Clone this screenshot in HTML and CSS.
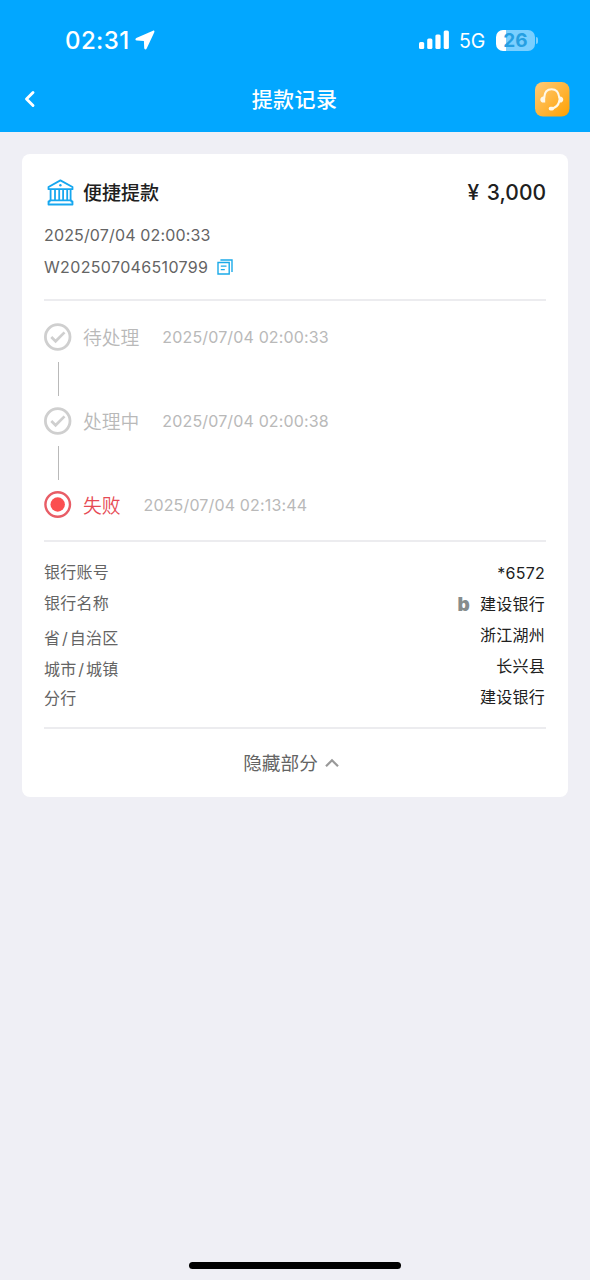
FILE: index.html
```html
<!DOCTYPE html>
<html lang="zh-CN">
<head>
<meta charset="utf-8">
<meta name="viewport" content="width=device-width, initial-scale=1">
<title>提款记录</title>
<link rel="stylesheet" href="styles.css">
</head>
<body>
<header class="header">
  <div class="status">
    <span class="clock">02:31</span>
    <svg class="location" width="20" height="20" viewBox="0 0 20 20"><path d="M18 0.7 1.3 8C0 8.7.1 10.5 1.8 10.6L8.9 10.9 9.2 18C9.3 19.7 11 19.9 11.7 18.5L19.3 2.2C19.8 1.1 19 .3 18 .7Z" fill="#fff"/></svg>
    <svg class="signal" width="31" height="20" viewBox="0 0 31 20" fill="#fff"><rect x="0" y="12" width="5.2" height="7" rx="1.5"/><rect x="8.2" y="8.4" width="5.2" height="10.6" rx="1.5"/><rect x="16.4" y="4.5" width="5.2" height="14.5" rx="1.5"/><rect x="24.7" y="0.5" width="5.2" height="18.5" rx="1.5"/></svg>
    <span class="network">5G</span>
    <span class="battery">26</span><span class="battery-cap"></span>
  </div>
  <nav class="nav">
    <svg class="back" width="12" height="18" viewBox="0 0 12 18"><path d="M9 2.5 2.5 9 9 15.5" fill="none" stroke="#fff" stroke-width="2.9" stroke-linecap="round" stroke-linejoin="round"/></svg>
    <h1 class="title">提款记录</h1>
    <svg class="support" width="35" height="35" viewBox="0 0 35 35">
      <defs><linearGradient id="orange" x1="0" y1="0" x2="1" y2="1"><stop offset="0" stop-color="#ffcb79"/><stop offset="1" stop-color="#ffa000"/></linearGradient></defs>
      <rect x="0" y="0" width="34.5" height="34.5" rx="8" fill="url(#orange)"/>
      <path d="M9.2 15.5C9.5 10.4 12.3 7.2 16.6 7.2S23.7 10.4 24.3 15.5M24.3 19C23.5 23.2 20.7 26 16.1 26.7" fill="none" stroke="#fff8e8" stroke-width="2.1" stroke-linecap="round"/>
      <path d="M10.2 14.4v6.2H8.7c-4.5 0-4.5-6.2 0-6.2ZM23.5 14.4v6.2h1.4c4.5 0 4.5-6.2 0-6.2Z" fill="#fff8e8"/><rect x="13.7" y="24.8" width="5.4" height="3.7" rx="1.8" fill="#fff8e8"/>
    </svg>
  </nav>
</header>
<main class="card">
  <section class="summary">
    <div class="summary-head">
      <svg class="bank" width="27" height="27" viewBox="0 0 27 27" fill="none" stroke="#17a7ef" stroke-width="1.8" stroke-linejoin="round"><path d="M1.5 8 13.4 1.4 25.5 8V10.2H1.5ZM3.6 10.7V21M8 10.7V21M12.2 10.7V21M16.1 10.7V21M20.2 10.7V21M23.6 10.7V21M2.7 21.3H24.3V22.5H25.5V25.5H1.5V22.5H2.7Z"/><circle cx="13.4" cy="6.3" r="1.2" fill="#17a7ef" stroke="none"/></svg>
      <span class="method">便捷提款</span>
      <span class="amount">¥ 3,000</span>
    </div>
    <div class="meta">2025/07/04 02:00:33</div>
    <div class="meta order"><span class="order-id">W202507046510799</span>
      <svg width="16" height="16" viewBox="0 0 16 16" fill="none" stroke="#1baae9" stroke-width="1.4"><path d="M3.4 1H15V13M1 3.5H12.2V15H1ZM3.8 7.1H9.5M3.8 10.6H7.8"/></svg>
    </div>
  </section>
  <section class="timeline">
    <div class="step">
      <svg width="28" height="28" viewBox="0 0 28 28" fill="none" stroke="#cfcfcf"><circle cx="13.7" cy="14" r="12.3" stroke-width="2.8"/><path d="m7.3 14 4.3 4.3 8.9-8.9" stroke-width="2.7"/></svg>
      <span class="state">待处理</span><time class="time">2025/07/04 02:00:33</time>
    </div>
    <div class="connector"></div>
    <div class="step">
      <svg width="28" height="28" viewBox="0 0 28 28" fill="none" stroke="#cfcfcf"><circle cx="13.7" cy="14" r="12.3" stroke-width="2.8"/><path d="m7.3 14 4.3 4.3 8.9-8.9" stroke-width="2.7"/></svg>
      <span class="state">处理中</span><time class="time">2025/07/04 02:00:38</time>
    </div>
    <div class="connector"></div>
    <div class="step failed">
      <svg width="28" height="28" viewBox="0 0 28 28"><circle cx="13.7" cy="13.5" r="12.3" fill="none" stroke="#e85d66" stroke-width="2.4"/><circle cx="13.7" cy="13.5" r="7.2" fill="#fb4f50"/></svg>
      <span class="state">失败</span><time class="time">2025/07/04 02:13:44</time>
    </div>
  </section>
  <section class="details">
    <div class="labels"><span>银行账号</span><span>银行名称</span><span class="region">省<i class="slash">/</i>自治区</span><span class="city">城市<i class="slash">/</i>城镇</span><span>分行</span></div>
    <div class="values"><span class="account">*6572</span><span class="bank-name"><b class="bank-mark">b</b>建设银行</span><span>浙江湖州</span><span>长兴县</span><span>建设银行</span></div>
  </section>
  <div class="toggle"><span class="toggle-text">隐藏部分</span>
    <svg width="14" height="10" viewBox="0 0 14 10"><path d="m1 8.3 6-6 6 6" fill="none" stroke="#999" stroke-width="2.2"/></svg>
  </div>
</main>
<footer class="home"><div class="home-bar"></div></footer>
</body>
</html>
```
FILE: styles.css
```css
* { box-sizing: border-box; }
body { margin: 0; min-height: 1280px; display: flex; flex-direction: column; background: #efeff5; font-family: Inter, "Noto Sans CJK SC", sans-serif; color: #202020; }
svg { display: block; flex: none; }
span, time { white-space: nowrap; }
.header { height: 132px; padding-top: 20px; background: #02a7ff; color: #fff; }
.status { height: 40px; display: flex; align-items: center; padding: 0 52px 0 65px; }
.clock { width: 65px; font-size: 24px; font-weight: 500; letter-spacing: .4px; }
.location { margin-left: 5px; }
.signal { margin-left: auto; }
.network { width: 27px; margin: 2px 10px 0 9px; font-size: 19.5px; }
.battery { width: 39px; height: 21px; border-radius: 7px; background: linear-gradient(90deg, #fff 10px, #7acfff 10px); color: #259fe2; font-size: 19px; line-height: 21px; font-weight: 700; text-align: center; }
.battery-cap { width: 2px; height: 7px; margin-left: 1px; border-radius: 0 3px 3px 0; background: #7acfff; }
.nav { height: 72px; padding: 6px 20px 0 24px; display: grid; grid-template-columns: 35px 1fr 35px; align-items: center; }
.title { margin: 0; padding: 2px 5px 0 0; text-align: center; font-size: 21px; line-height: 30px; font-weight: 500; letter-spacing: .4px; }
.card { width: 546px; height: 643px; margin: 22px; padding: 0 22px; border-radius: 8px; background: #fff; }
.summary { height: 147px; padding-top: 22px; border-bottom: 2px solid #ececef; }
.summary-head { height: 33px; display: flex; align-items: center; }
.bank { margin: 0 9px 0 3px; }
.method { padding-top: 2px; font-size: 19px; font-weight: 500; line-height: 28px; }
.amount { margin-left: auto; font-size: 21px; font-weight: 500; letter-spacing: 0; word-spacing: 2px; }
.meta { height: 32px; margin-top: 10px; line-height: 32px; font-size: 16px; letter-spacing: .15px; color: #646464; }
.order { margin-top: 0; display: flex; align-items: center; gap: 9px; }
.order-id { letter-spacing: .35px; }
.timeline { height: 241px; padding-top: 22px; border-bottom: 2px solid #ececef; }
.step { height: 28px; display: flex; align-items: center; color: #b9b9b9; }
.state { height: 28px; margin: 0 23px 0 11px; font-size: 18.8px; line-height: 31px; font-weight: 350; }
.time { font-size: 16px; letter-spacing: .15px; }
.failed .state { color: #e64a54; }
.connector { width: 1px; height: 34px; margin: 11px 0 11px 14px; background: #b9b9b9; }
.details { height: 187px; padding: 15px 1px 0 0; border-bottom: 2px solid #ececef; display: flex; justify-content: space-between; font-size: 16px; line-height: 31px; letter-spacing: .25px; }
.labels, .values { display: flex; flex-direction: column; }
.labels { color: #646464; }
.region { margin-top: 4px; }
.city + span { margin-top: -2px; }
.slash { margin: 0 1.7px; font-style: normal; }
.values { align-items: flex-end; color: #202020; }
.account { padding-top: 1px; }
.bank-name { height: 31px; display: flex; align-items: center; }
.bank-mark { margin-right: 10px; font: 900 19px/31px Inter, sans-serif; color: #868d8d; }
.toggle { height: 67px; display: flex; align-items: center; justify-content: center; gap: 7px; padding: 1px 8px 0 0; font-size: 18.7px; color: #646464; }
.toggle-text { padding-bottom: 3px; }
.home { margin-top: auto; height: 18px; display: flex; justify-content: center; }
.home-bar { width: 212px; height: 7px; border-radius: 4px; background: #000; }
```
